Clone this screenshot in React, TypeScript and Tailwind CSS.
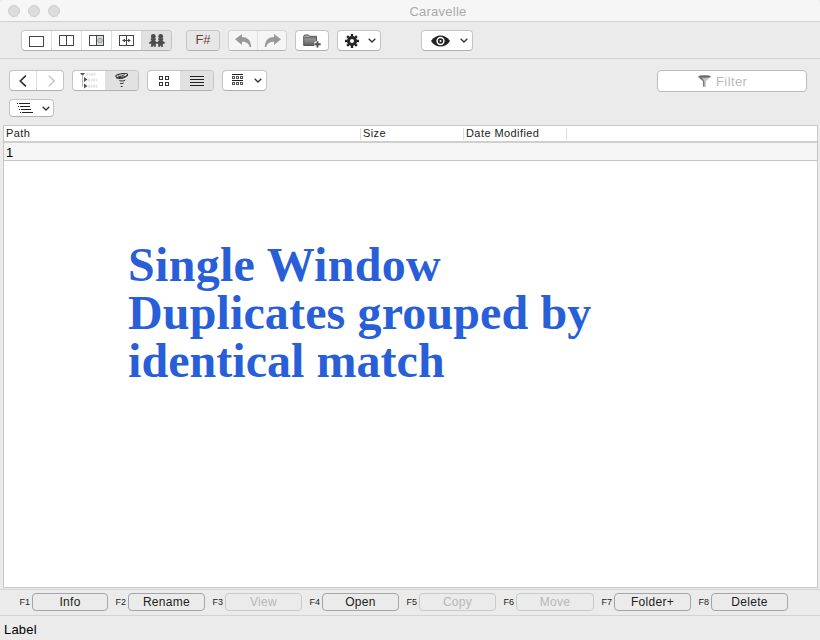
import type { ReactNode } from "react";

function Group({ className = "", children }: { className?: string; children: ReactNode }) {
  return (
    <div className={`flex shrink-0 overflow-hidden rounded-[4px] border border-[#c4c4c4] border-b-[#b0b0b0] bg-white ${className}`}>
      {children}
    </div>
  );
}

function Seg({ className = "", children }: { className?: string; children: ReactNode }) {
  return <div className={`flex h-full shrink-0 items-center justify-center ${className}`}>{children}</div>;
}

function Chevron() {
  return (
    <svg width="8" height="5" viewBox="0 0 8 5" fill="none" stroke="#333" strokeWidth="1.3">
      <path d="M.7 .7 4 4 7.3 .7" />
    </svg>
  );
}

function Pane({ kind }: { kind: "single" | "double" | "preview" | "sync" }) {
  return (
    <svg width="15" height="11" viewBox="0 0 15 11" fill="none" stroke="#444" shapeRendering="crispEdges">
      {kind === "preview" && <rect x="8" y="1" width="6" height="9" fill="#ddd" stroke="none" />}
      <rect x=".5" y=".5" width="14" height="10" />
      {kind !== "single" && <path d="M7.5 0v11" />}
      {kind === "preview" && <circle cx="11" cy="5.5" r="2.2" stroke="#82a0aa" fill="#d8c6b8" shapeRendering="auto" />}
      {kind === "sync" && (
        <>
          <path d="M4 5.5h7" />
          <path d="M3 5.5 6 3.7v3.6ZM12 5.5 9 3.7v3.6Z" fill="#444" stroke="none" shapeRendering="auto" />
        </>
      )}
    </svg>
  );
}

function Twins() {
  return (
    <svg width="16" height="13" viewBox="0 0 16 13" fill="#4a4a4a">
      <circle cx="4.3" cy="2.4" r="2.4" />
      <circle cx="11.7" cy="2.4" r="2.4" />
      <path d="M1.8 4.3h5v1.5L6 6.8l2 1.4 2-1.4-.8-1V4.3h5v1.5l-.8 1 2.4 1.5v1.5h-2v1.2l.4 1.7h-2l-.5-1.6-.6 1.6h-2l.2-2.9H6.7l.2 2.9h-2l-.6-1.6-.5 1.6h-2l.4-1.7V9.8h-2V8.3l2.4-1.5-.8-1Z" />
    </svg>
  );
}

function Arrow({ flip = false }: { flip?: boolean }) {
  return (
    <svg width="17" height="14" viewBox="0 0 17 14" className={flip ? "-scale-x-100" : ""}>
      <path d="M0 5.3 7 0v3.1c5 0 8.7 2.6 9.3 9.9L14.8 13C13.5 9.2 11.4 7.8 7 7.8V11Z" fill="#999" />
    </svg>
  );
}

function FolderPlus() {
  return (
    <svg width="18" height="14" viewBox="0 0 18 14">
      <defs>
        <linearGradient id="folder" x1="0" y1="0" x2="0" y2="1">
          <stop stopColor="#b5b5b5" />
          <stop offset="1" stopColor="#5f5f5f" />
        </linearGradient>
      </defs>
      <path d="M.7 11.5V2.3L1.5 1h4l1 1.3h7v9.2H.7Z" fill="url(#folder)" stroke="#555" />
      <path d="M1 3.8h12" stroke="#666" />
      <path d="M14.5 7v6.5M11.2 10.3h6.6" stroke="white" strokeWidth="4" />
      <path d="M14.5 7.2v6.3M11.4 10.3h6.3" stroke="#555" strokeWidth="2" />
    </svg>
  );
}

function Gear() {
  return (
    <svg width="14" height="14" viewBox="0 0 14 14" fill="none" stroke="#262626">
      <path d="M7 0v3M7 11v3M0 7h3M11 7h3M2.1 2.1l2.1 2.1M9.8 9.8l2.1 2.1M11.9 2.1l-2.1 2.1M4.2 9.8l-2.1 2.1" strokeWidth="2.4" />
      <circle cx="7" cy="7" r="3.5" strokeWidth="3" />
    </svg>
  );
}

function Eye() {
  return (
    <svg width="19" height="12" viewBox="0 0 19 12">
      <path d="M0 6C4.8-1.4 14.2-1.4 19 6 14.2 13.4 4.8 13.4 0 6Z" fill="#222" />
      <circle cx="9.5" cy="6" r="3.4" fill="#222" stroke="white" strokeWidth="1.5" />
      <circle cx="9.5" cy="6" r="1" fill="white" />
    </svg>
  );
}

function Nav({ next = false }: { next?: boolean }) {
  return (
    <svg width="8" height="12" viewBox="0 0 8 12" fill="none" stroke={next ? "#bdbdbd" : "#333"} strokeWidth={next ? 1.3 : 1.7}>
      <path d={next ? "M.7 .6 6.3 6 .7 11.4" : "M6.9 .6 1.3 6l5.6 5.4"} />
    </svg>
  );
}

function Tree() {
  return (
    <svg width="18" height="17" viewBox="0 0 18 17" fill="#555">
      <path d="M0 1h5L2.5 4ZM4 5l3.5 2.5L4 10ZM4 11.5 7.5 14 4 16.5Z" />
      <path d="M2.5 3v12" stroke="#bbb" />
      <path d="M6 2.2h10M8 8h10M8 14.2h10" stroke="#e6e6e6" strokeWidth="3" strokeDasharray="2 .5" />
    </svg>
  );
}

function Tornado() {
  return (
    <svg width="14" height="15" viewBox="0 0 14 15" fill="none" stroke="#292929" strokeWidth="1">
      <ellipse cx="6.7" cy="2.5" rx="6" ry="1.8" transform="rotate(-9 6.7 2.5)" />
      <path d="M3 3.2C6 3.8 8 2.5 9.6 1.5M1.4 5c2.4 1.2 8.2.8 11-2.8M4.4 7.6c1.8.8 4.2.4 5.8-.5M5.2 10.3c1.1.5 2.5.3 3.5-.3M5.8 13.5h1.7" />
    </svg>
  );
}

function Squares() {
  return (
    <svg width="10" height="10" viewBox="0 0 10 10" fill="none" stroke="#333" shapeRendering="crispEdges">
      <path d="M.5.5h3v3h-3ZM6.5.5h3v3h-3ZM.5 6.5h3v3h-3ZM6.5 6.5h3v3h-3Z" />
    </svg>
  );
}

function Lines() {
  return (
    <svg width="14" height="10" viewBox="0 0 14 10" stroke="#222" shapeRendering="crispEdges">
      <path d="M0 .5h14M0 3.5h14M0 6.5h14M0 9.5h14" />
    </svg>
  );
}

function GroupedGrid() {
  return (
    <svg width="11" height="11" viewBox="0 0 11 11" fill="none" stroke="#333" shapeRendering="crispEdges">
      <path d="M0 .5h11M0 6.5h11" stroke="#222" />
      <path d="M.5 2.5h2v2h-2ZM4.5 2.5h2v2h-2ZM8.5 2.5h2v2h-2ZM.5 8.5h2v2h-2ZM4.5 8.5h2v2h-2ZM8.5 8.5h2v2h-2Z" stroke="#555" />
    </svg>
  );
}

function Outline() {
  return (
    <svg width="16" height="10" viewBox="0 0 16 10" stroke="#222" shapeRendering="crispEdges">
      <path d="M0 .5h1M2 .5h11M1 3.5h1M3 3.5h10M2 6.5h1M4 6.5h10M3 9.5h1M5 9.5h11" />
    </svg>
  );
}

function Funnel() {
  return (
    <svg width="13" height="12" viewBox="0 0 13 12">
      <path d="M0 1.8 5 6.3v5.2l2.8.5V6.3l5.2-4.5Z" fill="#c4c4c4" />
      <path d="M.3 2 5 6.3v5.2h1.3V6.2L3.6 2Z" fill="#777" />
      <ellipse cx="6.5" cy="1.5" rx="6.2" ry="1.2" fill="#666" stroke="#888" strokeWidth=".5" />
    </svg>
  );
}

const actions = [
  { key: "F1", label: "Info", size: "w-[76px]" },
  { key: "F2", label: "Rename", size: "w-[77px]" },
  { key: "F3", label: "View", size: "w-[77px]", disabled: true },
  { key: "F4", label: "Open", size: "w-[77px]" },
  { key: "F5", label: "Copy", size: "w-[77px]", disabled: true },
  { key: "F6", label: "Move", size: "w-[78px]", disabled: true },
  { key: "F7", label: "Folder+", size: "w-[77px]" },
  { key: "F8", label: "Delete", size: "w-[77px]" },
];

export default function App() {
  return (
    <div className="flex h-[640px] w-[820px] flex-col overflow-hidden bg-[#ebebeb] font-['Liberation_Sans',Arial,sans-serif] text-[#222]">
      <header className="grid h-[22px] shrink-0 grid-cols-[1fr_auto_1fr] items-center rounded-t-[4px] border-b border-[#d1d1d1] bg-[#f6f6f6]">
        <div className="flex gap-2 pl-2">
          <i className="size-3 rounded-full border border-[#cecece] bg-[#dcdcdc]" />
          <i className="size-3 rounded-full border border-[#cecece] bg-[#dcdcdc]" />
          <i className="size-3 rounded-full border border-[#cecece] bg-[#dcdcdc]" />
        </div>
        <h1 className="-mr-[28px] pt-[2px] pl-[28px] text-[13px] tracking-[0.25px] text-[#aaa]">Caravelle</h1>
      </header>

      <div className="flex h-[37px] shrink-0 items-start border-b border-[#d3d3d3] pt-2 pl-[21px]">
        <Group className="h-[21px] w-[151px]">
          <Seg className="w-[30px] border-r border-[#ddd] pt-px"><Pane kind="single" /></Seg>
          <Seg className="w-[30px] border-r border-[#ddd]"><Pane kind="double" /></Seg>
          <Seg className="w-[30px] border-r border-[#ddd]"><Pane kind="preview" /></Seg>
          <Seg className="w-[30px] border-r border-[#ddd]"><Pane kind="sync" /></Seg>
          <Seg className="flex-1 bg-[#e1e1e1]"><Twins /></Seg>
        </Group>
        <Group className="ml-[14px] h-[21px] w-[34px]">
          <Seg className="w-full bg-[#e7e7e7] pb-px text-[13px] text-[#6b4038]">F#</Seg>
        </Group>
        <Group className="ml-2 h-[21px] w-[59px] border-[#d3d3d3]">
          <Seg className="w-[29px] border-r border-[#e2e2e2] bg-[#f5f5f5]"><Arrow /></Seg>
          <Seg className="flex-1 bg-[#f5f5f5]"><Arrow flip /></Seg>
        </Group>
        <Group className="ml-2 h-[21px] w-[34px]"><Seg className="w-full"><FolderPlus /></Seg></Group>
        <Group className="ml-2 h-[21px] w-11"><Seg className="w-full gap-[9px] pl-[3px]"><Gear /><Chevron /></Seg></Group>
        <Group className="ml-10 h-[21px] w-[52px]"><Seg className="w-full gap-[10px] pl-[4px]"><Eye /><Chevron /></Seg></Group>
      </div>

      <div className="flex h-10 shrink-0 items-start pt-[11px] pl-[9px]">
        <Group className="h-[21px] w-[55px]">
          <Seg className="w-[27px] border-r border-[#ddd]"><Nav /></Seg>
          <Seg className="flex-1 pl-[3px]"><Nav next /></Seg>
        </Group>
        <Group className="ml-2 h-[21px] w-[67px]">
          <Seg className="w-8"><Tree /></Seg>
          <Seg className="flex-1 bg-[#e1e1e1]"><Tornado /></Seg>
        </Group>
        <Group className="ml-2 h-[21px] w-[67px]">
          <Seg className="w-8"><Squares /></Seg>
          <Seg className="flex-1 bg-[#e1e1e1]"><Lines /></Seg>
        </Group>
        <Group className="ml-2 h-[21px] w-[45px]">
          <Seg className="w-full gap-[11px] pl-[5px]"><span className="-mt-[2px]"><GroupedGrid /></span><Chevron /></Seg>
        </Group>
        <div className="mr-[13px] ml-auto flex h-[22px] w-[150px] items-center rounded-[4px] border border-[#bcbcbc] bg-white pl-10 text-[13px] tracking-[0.4px] text-[#b9b9b9]">
          <Funnel /><span className="ml-[5px] pt-px">Filter</span>
        </div>
      </div>

      <div className="h-[26px] shrink-0 pl-[9px]">
        <Group className="h-[18px] w-[45px]">
          <Seg className="w-full gap-[9px] pl-[3px]"><Outline /><Chevron /></Seg>
        </Group>
      </div>

      <main className="mr-[2px] ml-[3px] flex h-[463px] shrink-0 flex-col border border-[#c7c7c7] bg-white">
        <div className="flex h-[17px] shrink-0 items-center border-b-2 border-[#cfcfcf] text-[11px] leading-[10px] tracking-[0.42px]">
          <div className="h-3 w-[357px] border-r border-[#ddd] pl-[2px]">Path</div>
          <div className="h-3 w-[103px] border-r border-[#ddd] pl-[2px]">Size</div>
          <div className="h-3 w-[103px] border-r border-[#ddd] pl-[2px]">Date Modified</div>
        </div>
        <div className="flex h-[18px] shrink-0 items-center border-b border-[#c7c7c7] bg-[#f5f5f5] pt-[2px] pl-[2px] text-[13px] text-black">1</div>
        <p className="mt-20 ml-[124px] whitespace-nowrap font-['Liberation_Serif','Times_New_Roman',serif] text-[48px] leading-[48px] font-bold text-[#285fd9]">
          <span className="block tracking-[0.31px]">Single Window</span>
          <span className="block tracking-[0.14px]">Duplicates grouped by</span>
          <span className="block tracking-[0.05px]">identical match</span>
        </p>
      </main>

      <nav className="mt-px flex h-[27px] shrink-0 border-y border-[#d3d3d3] pt-[3px] pl-[12px]">
        {actions.map(({ key, label, size, disabled }) => (
          <div key={key} className="flex h-[18px] shrink-0 items-center">
            <span className="w-[18px] shrink-0 pt-px text-right text-[9px]">{key}</span>
            <button className={`ml-[2px] flex h-[18px] shrink-0 items-center justify-center rounded-[4px] border text-[12px] tracking-[0.3px] ${size} ${disabled ? "border-[#cacaca] text-[#b8b8b8]" : "border-[#a5a5a5]"}`}>
              {label}
            </button>
          </div>
        ))}
      </nav>
      <footer className="flex flex-1 items-center pt-[3px] pl-1 text-[13px] tracking-[0.2px] text-black">Label</footer>
    </div>
  );
}
